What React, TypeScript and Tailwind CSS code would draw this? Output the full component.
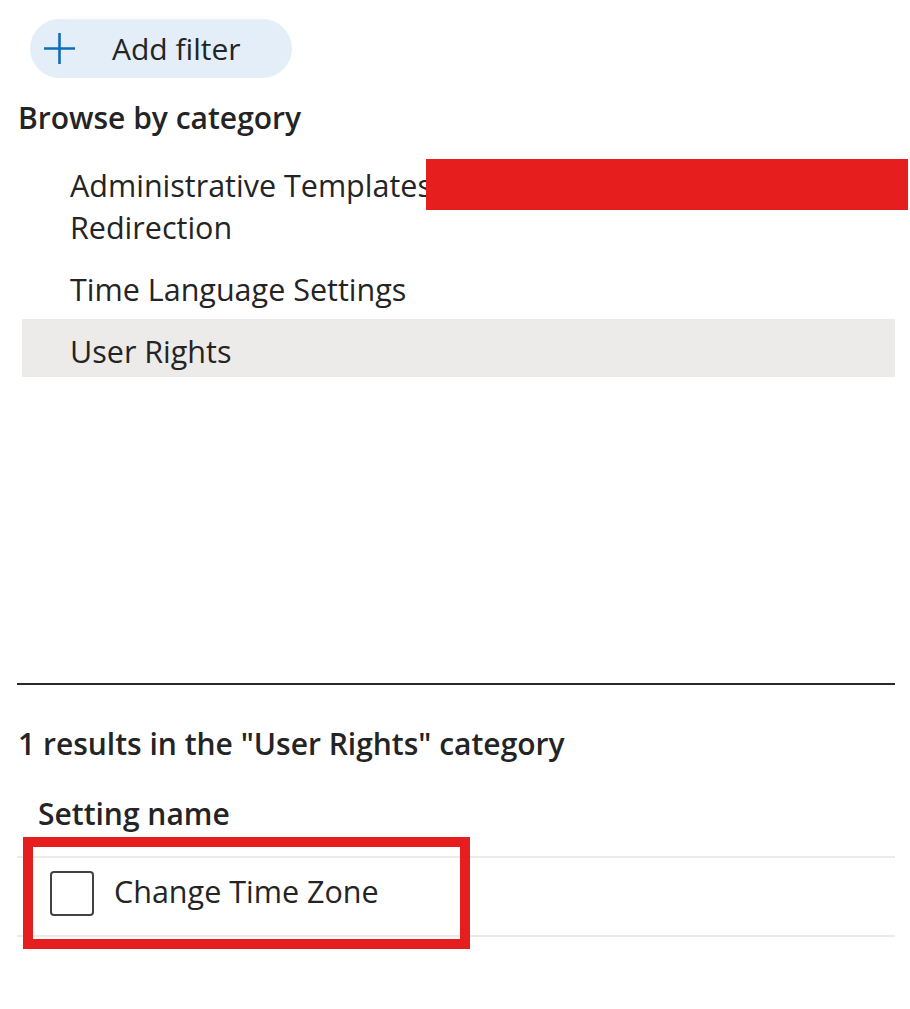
import React from "react";

const rows = [
  { id: "admin", lines: ["Administrative Templates\\", "Redirection"], redacted: true },
  { id: "time", lines: ["Time Language Settings"] },
  { id: "user", lines: ["User Rights"], selected: true },
];

export default function App() {
  return (
    <div
      className="w-[910px] h-[1009px] bg-white pl-[17px] pr-[15px] pt-[19px] text-[#242424] overflow-hidden"
      style={{ fontFamily: '"Open Sans", "Noto Sans", sans-serif' }}
    >
      {/* Add filter pill */}
      <button className="ml-[13px] flex h-[59px] w-[262px] items-center rounded-full bg-[#e3eef9] pl-[13px]">
        <svg width="33" height="33" viewBox="0 0 33 33" fill="none">
          <path d="M16.5 1v31M1 16.5h31" stroke="#0f6cbd" strokeWidth="2.6" />
        </svg>
        <span className="ml-[36px] text-[30px] leading-[40px]">Add filter</span>
      </button>

      <h2 className="mt-[20px] text-[30px] font-semibold leading-[40px] pl-[1px]">Browse by category</h2>

      {/* Category list */}
      <div className="mt-[15px] flex flex-col gap-[4px]">
        {rows.map((row) => (
          <div
            key={row.id}
            className={`relative ml-[5px] pt-[11px] pb-[5px] pl-[48px] ${row.selected ? "bg-[#edebe9]" : ""}`}
          >
            {row.lines.map((line) => (
              <div key={line} className="text-[30.5px] leading-[42px]">
                {line}
              </div>
            ))}
            {row.redacted && <div className="absolute left-[404px] top-[6px] h-[51px] w-[482px] bg-[#e61e1e]" />}
          </div>
        ))}
      </div>

      {/* Divider */}
      <div className="mt-[306px] h-[2px] w-[878px] bg-[#292929]" />

      <h3 className="mt-[39px] pl-[1px] text-[30px] font-semibold leading-[40px]">
        1 results in the "User Rights" category
      </h3>

      {/* Results table */}
      <div className="mt-[30px] w-[878px]">
        <div className="border-b-2 border-[#edebe9] pb-[22px] pl-[21px] text-[30px] font-semibold leading-[40px]">
          Setting name
        </div>
        <div className="relative flex h-[79px] items-start border-b-2 border-[#edebe9] pl-[33px]">
          <div className="mt-[13px] h-[45px] w-[44px] rounded-[4px] border-2 border-[#424242]" />
          <span className="ml-[20px] mt-[13px] text-[30.5px] leading-[40px]">Change Time Zone</span>
          <div className="absolute left-[6px] top-[-21px] h-[112px] w-[447px] border-[10px] border-[#e61e1e]" />
        </div>
      </div>
    </div>
  );
}
